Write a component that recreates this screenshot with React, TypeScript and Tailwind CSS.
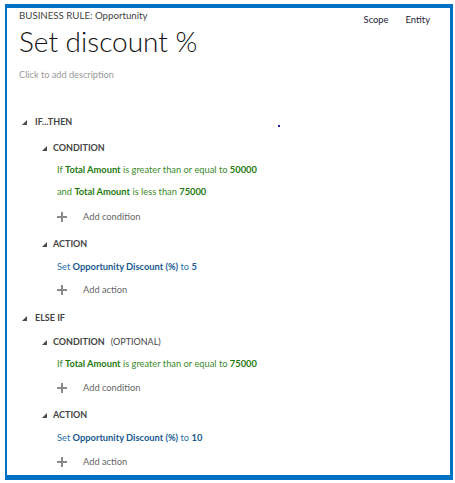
import React from 'react';

const font = { fontFamily: 'Lato, "Open Sans", sans-serif' };

const Triangle: React.FC = () => (
  <svg width="5" height="5" viewBox="0 0 5 5" className="shrink-0">
    <polygon points="5,0 5,5 0,5" fill="#4a4a4a" />
  </svg>
);

const Plus: React.FC = () => (
  <svg width="10" height="10" viewBox="0 0 10 10" className="shrink-0">
    <rect x="4" y="0" width="2" height="10" fill="#8a8a8a" />
    <rect x="0" y="4" width="10" height="2" fill="#8a8a8a" />
  </svg>
);

const Header: React.FC<{ level: 1 | 2; label: string; note?: string; mt: string }> = ({ level, label, note, mt }) => (
  <div className={`flex items-center h-[22px] ${mt} ${level === 1 ? 'pl-[15px] gap-[8px]' : 'pl-[35px] gap-[6px]'}`}>
    <Triangle />
    <span className="text-[9px] font-bold text-[#444]">
      {label}
      {note && <span className="font-normal ml-[6px]">{note}</span>}
    </span>
  </div>
);

const Line: React.FC<{ mt: string; children: React.ReactNode; color: string }> = ({ mt, children, color }) => (
  <div className={`flex items-center h-[22px] pl-[50px] text-[9.3px] ${mt} ${color}`}>
    <span>{children}</span>
  </div>
);

const AddRow: React.FC<{ label: string; mt: string }> = ({ label, mt }) => (
  <div className={`flex items-center h-[22px] pl-[50px] gap-[16px] ${mt}`}>
    <Plus />
    <span className="text-[9.3px] text-[#666]">{label}</span>
  </div>
);

const G: React.FC<{ children: React.ReactNode }> = ({ children }) => (
  <b className="font-bold text-[#1f7a10]">{children}</b>
);

const B: React.FC<{ children: React.ReactNode }> = ({ children }) => (
  <b className="font-bold text-[#17598f]">{children}</b>
);

export default function App() {
  return (
    <div className="w-[455px] h-[483px] bg-white pt-[4px] pl-[5px]" style={font}>
      <div className="relative w-[448px] h-[476px] border-t-[4px] border-l-[2px] border-r-[3px] border-b-[5px] border-[#0072c6] bg-white">
        <div className="flex justify-between">
          <div className="pl-[12px] text-[9.7px] leading-[14px] text-[#444]">BUSINESS RULE: Opportunity</div>
          <div className="flex gap-[17px] pr-[20px] pt-[5px] text-[9.4px] leading-[14px] text-[#1d1d3a]">
            <span>Scope</span>
            <span>Entity</span>
          </div>
        </div>
        <h1 className="pl-[12px] mt-[-3px] text-[28px] leading-[34px] font-light text-[#111]">Set discount %</h1>
        <div className="pl-[12px] mt-[10px] text-[9.2px] leading-[14px] text-[#9a9a9a]">Click to add description</div>

        <span className="absolute left-[271px] top-[117px] w-[2px] h-[2px] bg-[#2020a0]" />

        <div className="mt-[29px]">
          <Header level={1} label="IF...THEN" mt="" />
          <Header level={2} label="CONDITION" mt="mt-[4px]" />
          <Line mt="" color="text-[#3b8a2b]">
            If <G>Total Amount</G> is greater than or equal to <G>50000</G>
          </Line>
          <Line mt="" color="text-[#3b8a2b]">
            and <G>Total Amount</G> is less than <G>75000</G>
          </Line>
          <AddRow label="Add condition" mt="mt-[3px]" />
          <Header level={2} label="ACTION" mt="mt-[5px]" />
          <Line mt="mt-[1px]" color="text-[#2a6fa8]">
            Set <B>Opportunity Discount (%)</B> to <B>5</B>
          </Line>
          <AddRow label="Add action" mt="mt-[1px]" />
          <Header level={1} label="ELSE IF" mt="mt-[6px]" />
          <Header level={2} label="CONDITION" note="(OPTIONAL)" mt="mt-[2px]" />
          <Line mt="" color="text-[#3b8a2b]">
            If <G>Total Amount</G> is greater than or equal to <G>75000</G>
          </Line>
          <AddRow label="Add condition" mt="mt-[2px]" />
          <Header level={2} label="ACTION" mt="mt-[5px]" />
          <Line mt="mt-[1px]" color="text-[#2a6fa8]">
            Set <B>Opportunity Discount (%)</B> to <B>10</B>
          </Line>
          <AddRow label="Add action" mt="mt-[2px]" />
        </div>
      </div>
    </div>
  );
}
